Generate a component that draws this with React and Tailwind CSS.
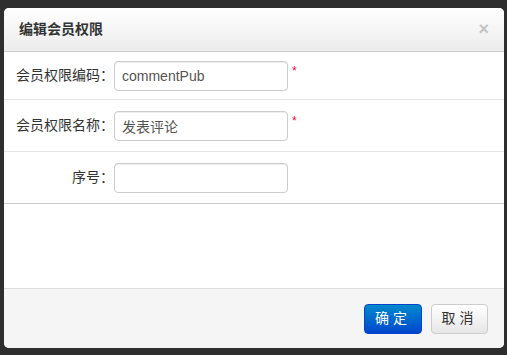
import React from 'react';

const fields = [
  { label: '会员权限编码：', value: 'commentPub', required: true, h: 'h-[48px]' },
  { label: '会员权限名称：', value: '发表评论', required: true, h: 'h-[52px]' },
  { label: '序号：', value: '', required: false, h: 'h-[52px]' },
];

const FieldRow = ({ label, value, required, h }) => (
  <div className={`flex ${h} items-center border-b border-[#e5e5e5] last:border-[#cccccc]`}>
    <label className="w-[110px] text-right text-[14px] text-[#333]">{label}</label>
    <input
      defaultValue={value}
      className="h-[30px] w-[174px] rounded-[4px] border border-[#cccccc] px-[7px] text-[14px] text-[#555] shadow-[inset_0_1px_1px_rgba(0,0,0,0.075)] outline-none"
    />
    {required && <span className="ml-[4px] -mt-[10px] text-[12px] text-[#ff0033]">*</span>}
  </div>
);

const App = () => {
  return (
    <div
      className="h-[355px] w-[507px] bg-[#2e2e2e] pt-[8px] pl-[4px]"
      style={{ fontFamily: '"Liberation Sans", Arial, "Noto Sans CJK SC", sans-serif' }}
    >
      <div className="flex h-[340px] w-[500px] flex-col overflow-hidden rounded-[5px] bg-white">
        <div className="flex h-[44px] shrink-0 items-center justify-between border-b border-[#cccccc] bg-gradient-to-b from-white to-[#ececec] pl-[15px] pr-[15px]">
          <h3 className="text-[14px] font-bold text-[#333]">编辑会员权限</h3>
          <span className="-mt-[2px] text-[18px] font-bold leading-none text-[#c4c4c4]">×</span>
        </div>
        <div className="flex-1">
          {fields.map((f) => (
            <FieldRow key={f.label} {...f} />
          ))}
        </div>
        <div className="flex h-[60px] items-center justify-end gap-[9px] border-t border-[#dddddd] bg-[#f5f5f5] pr-[16px]">
          <button className="h-[30px] w-[58px] rounded-[4px] border border-[#0044cc] bg-gradient-to-b from-[#0088cc] to-[#0044cc] text-[14px] tracking-[4px] text-white">
            确定
          </button>
          <button className="h-[30px] w-[57px] rounded-[4px] border border-[#cccccc] bg-gradient-to-b from-white to-[#e6e6e6] text-[14px] tracking-[4px] text-[#333]">
            取消
          </button>
        </div>
      </div>
    </div>
  );
};

export default App;
